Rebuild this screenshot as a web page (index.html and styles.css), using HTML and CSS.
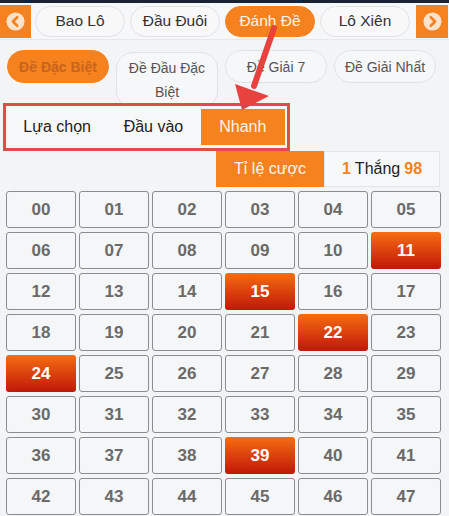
FILE: index.html
```html
<!DOCTYPE html>
<html lang="vi">

<head>
  <meta charset="UTF-8">
  <meta name="viewport" content="width=device-width, initial-scale=1.0">
  <title>Đánh Đề</title>
  <link rel="stylesheet" href="styles.css">
</head>

<body>
  <div class="topbar"></div>

  <div class="game-tabs">
    <div class="nav-btn">
      <svg width="19" height="19" viewBox="0 0 20 20"><circle cx="10" cy="10" r="9.5" fill="#fde3cc"/><path d="M11.8 5.5 7.3 10l4.5 4.5" fill="none" stroke="#f5821f" stroke-width="2.8" stroke-linecap="round" stroke-linejoin="round"/></svg>
    </div>
    <div class="game-tab">Bao Lô</div>
    <div class="game-tab">Đầu Đuôi</div>
    <div class="game-tab active">Đánh Đề</div>
    <div class="game-tab">Lô Xiên</div>
    <div class="nav-btn right">
      <svg width="19" height="19" viewBox="0 0 20 20"><circle cx="10" cy="10" r="9.5" fill="#fde3cc"/><path d="M8.2 5.5 12.7 10l-4.5 4.5" fill="none" stroke="#f5821f" stroke-width="2.8" stroke-linecap="round" stroke-linejoin="round"/></svg>
    </div>
  </div>

  <div class="sub-tabs">
    <div class="sub-tab active">Đề Đặc Biệt</div>
    <div class="sub-tab tall">Đề Đầu Đặc Biệt</div>
    <div class="sub-tab">Đề Giải 7</div>
    <div class="sub-tab">Đề Giải Nhất</div>
  </div>

  <div class="mode-box">
    <div class="mode">
      <div class="mode-item first">Lựa chọn</div>
      <div class="mode-item second">Đầu vào</div>
      <div class="mode-item active">Nhanh</div>
    </div>
  </div>

  <div class="odds">
    <div class="odds-label">Tỉ lệ cược</div>
    <div class="odds-value"><b>1</b> Thắng <b>98</b></div>
  </div>

  <div class="grid">
    <div class="cell">00</div><div class="cell">01</div><div class="cell">02</div><div class="cell">03</div><div class="cell">04</div><div class="cell">05</div>
    <div class="cell">06</div><div class="cell">07</div><div class="cell">08</div><div class="cell">09</div><div class="cell">10</div><div class="cell on">11</div>
    <div class="cell">12</div><div class="cell">13</div><div class="cell">14</div><div class="cell on">15</div><div class="cell">16</div><div class="cell">17</div>
    <div class="cell">18</div><div class="cell">19</div><div class="cell">20</div><div class="cell">21</div><div class="cell on">22</div><div class="cell">23</div>
    <div class="cell on">24</div><div class="cell">25</div><div class="cell">26</div><div class="cell">27</div><div class="cell">28</div><div class="cell">29</div>
    <div class="cell">30</div><div class="cell">31</div><div class="cell">32</div><div class="cell">33</div><div class="cell">34</div><div class="cell">35</div>
    <div class="cell">36</div><div class="cell">37</div><div class="cell">38</div><div class="cell on">39</div><div class="cell">40</div><div class="cell">41</div>
    <div class="cell">42</div><div class="cell">43</div><div class="cell">44</div><div class="cell">45</div><div class="cell">46</div><div class="cell">47</div>
  </div>

  <!-- annotation arrow -->
  <svg class="pointer" width="449" height="516" viewBox="0 0 449 516">
    <line x1="274" y1="28" x2="254" y2="86" stroke="#e8423f" stroke-width="6" stroke-linecap="round"/>
    <polygon points="235,84 269,96 242,110" fill="#e8423f"/>
  </svg>
</body>

</html>
```

FILE: styles.css
```css
body {
  margin: 0;
  background: #f3f4f6;
  font-family: "Liberation Sans", Arial, sans-serif;
  color: #333;
  position: relative;
  width: 449px;
  height: 516px;
  overflow: hidden;
}

.topbar {
  height: 3px;
  background: #1b2233;
}

.game-tabs {
  display: flex;
  align-items: center;
  height: 36px;
  gap: 5px;
  border-bottom: 1px solid #e6e8ec;
  background: #f6f7f9;
}

.nav-btn {
  width: 31px;
  height: 33px;
  background: #f5821f;
  display: flex;
  align-items: center;
  justify-content: center;
  margin-right: -1px;
}

.nav-btn.right {
  margin-left: 1px;
  margin-right: 0;
  width: 32px;
}

.game-tab {
  width: 90px;
  height: 31px;
  box-sizing: border-box;
  border: 1px solid #e1e2e6;
  border-radius: 16px;
  background: #f8f8f9;
  display: flex;
  align-items: center;
  justify-content: center;
  font-size: 15.5px;
  color: #333;
}

.game-tab.active {
  background: #f5821f;
  border-color: #f5821f;
  color: #fff4ea;
}

.sub-tabs {
  display: flex;
  align-items: flex-start;
  gap: 7px;
  height: 62px;
  padding: 10px 0 0 7px;
  box-sizing: border-box;
}

.sub-tab {
  width: 102px;
  height: 33px;
  box-sizing: border-box;
  border: 1px solid #e1e2e6;
  border-radius: 17px;
  background: #f6f7f9;
  display: flex;
  align-items: center;
  justify-content: center;
  text-align: center;
  font-size: 14px;
  color: #555;
}

.sub-tab.tall {
  height: 56px;
  line-height: 24px;
  padding: 0 6px;
  margin-top: 2px;
  position: relative;
  z-index: 0;
}

.sub-tab.active {
  background: #f5821f;
  border-color: #f5821f;
  color: #c8641c;
  font-weight: bold;
}

.mode-box {
  position: relative;
  z-index: 1;
  width: 287px;
  height: 48px;
  box-sizing: border-box;
  margin-left: 3px;
  margin-top: 1px;
  border: 3px solid #e24a4c;
  padding: 3px 2px;
  background: #f3f4f6;
}

.mode {
  display: flex;
  height: 36px;
  background: #f7f8fa;
}

.mode-item {
  display: flex;
  align-items: center;
  justify-content: center;
  font-size: 16px;
  color: #222;
}

.mode-item.first {
  width: 99px;
}

.mode-item.second {
  width: 95px;
}

.mode-item.active {
  width: 85px;
  background: #f5821f;
  color: #fff4ea;
}

.odds {
  display: flex;
  justify-content: flex-end;
  height: 36px;
  padding-right: 9px;
}

.odds-label {
  width: 108px;
  background: #f5821f;
  color: #fff4ea;
  font-size: 16px;
  display: flex;
  align-items: center;
  justify-content: center;
}

.odds-value {
  width: 116px;
  box-sizing: border-box;
  border: 1px solid #e4e5e8;
  background: #f7f8fa;
  font-size: 16px;
  color: #222;
  display: flex;
  align-items: center;
  justify-content: center;
  gap: 4px;
}

.odds-value b {
  color: #f5821f;
}

.grid {
  display: grid;
  grid-template-columns: repeat(6, 70px);
  grid-auto-rows: 37px;
  column-gap: 3px;
  row-gap: 4px;
  padding: 4px 0 0 6px;
}

.cell {
  box-sizing: border-box;
  border: 1.5px solid #8c8c8c;
  border-radius: 3px;
  background: #f5f6f8;
  display: flex;
  align-items: center;
  justify-content: center;
  font-size: 17px;
  font-weight: bold;
  color: #6a6a6a;
}

.cell.on {
  border: none;
  background: linear-gradient(#f56d12, #c01708);
  color: #fff;
}

.pointer {
  position: absolute;
  left: 0;
  top: 0;
  pointer-events: none;
  z-index: 5;
}
```
